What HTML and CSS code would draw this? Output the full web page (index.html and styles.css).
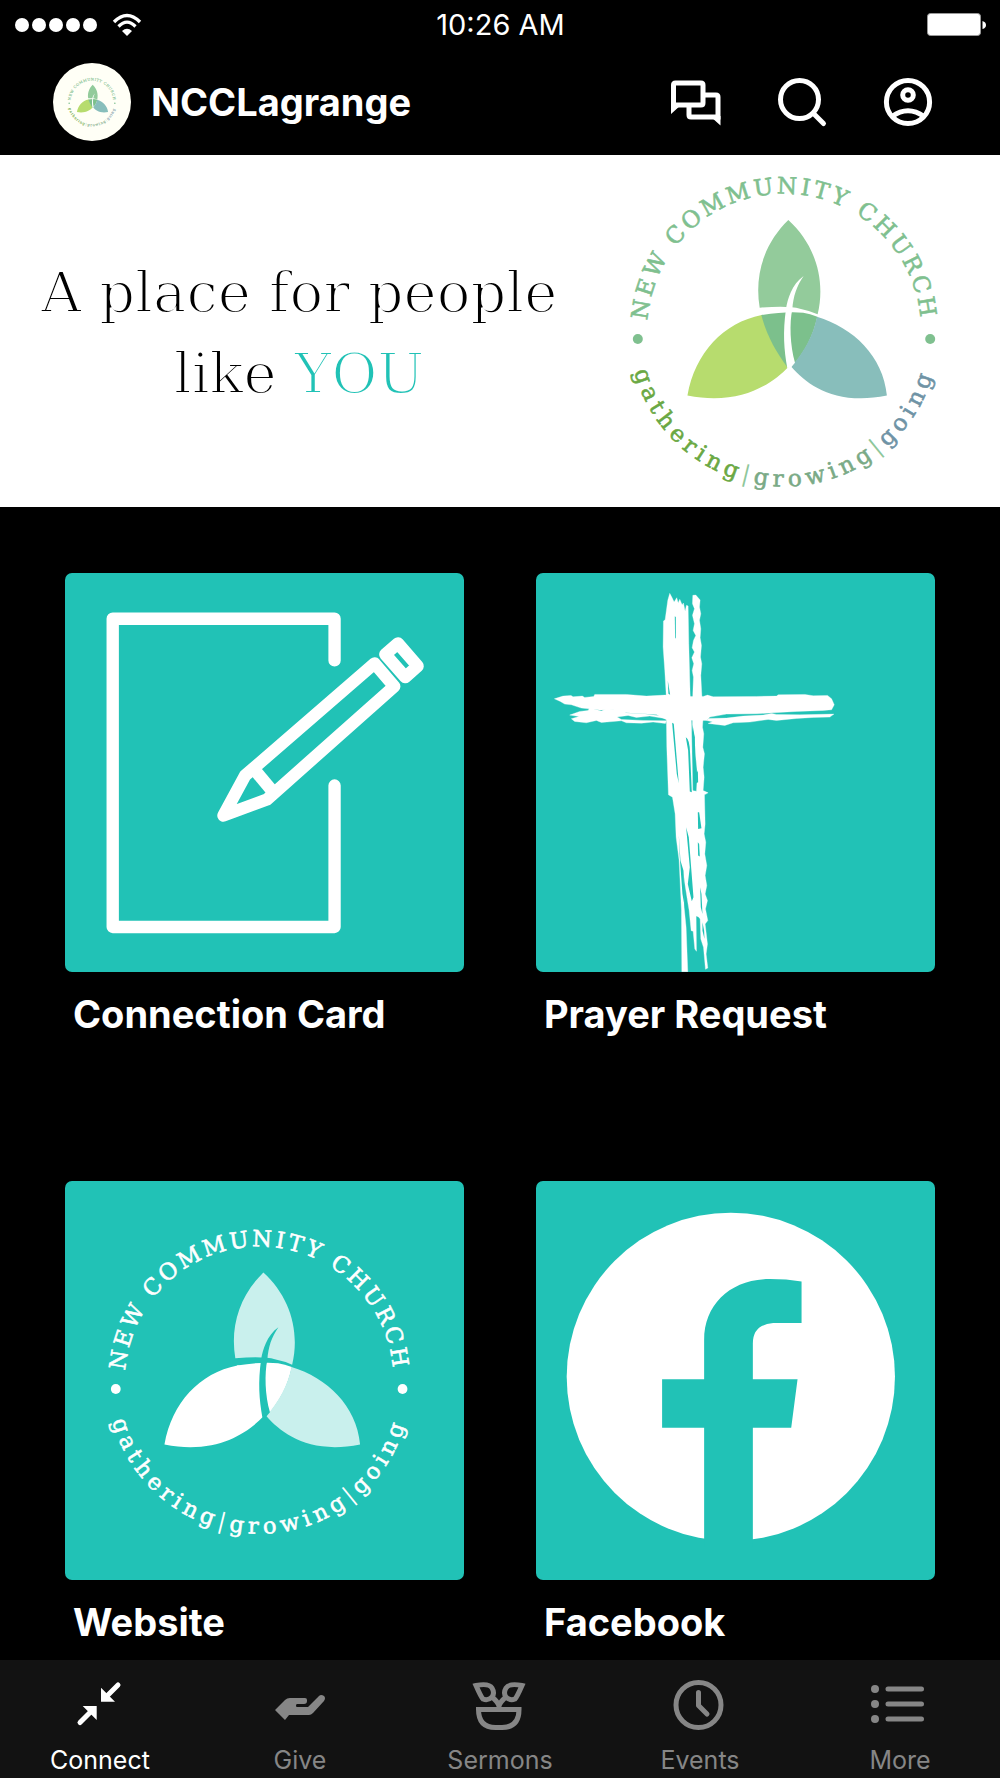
FILE: index.html
```html
<!DOCTYPE html>
<html lang="en">
<head>
    <meta charset="UTF-8">
    <meta name="viewport" content="width=device-width, initial-scale=1.0">
    <title>NCCLagrange</title>

    <link rel="stylesheet" href="styles.css">
</head>
<body>
    <div class="status">
        <div class="status_left">
            <span class="signal"><i></i><i></i><i></i><i></i><i></i></span>
            <svg class="wifi" viewBox="0 0 28 22">
                <path d="M1 8 Q14 -5 27 8" fill="none" stroke="#fff" stroke-width="3.4" />
                <path d="M5.500 12.500 Q14 4 22.500 12.500" fill="none" stroke="#fff" stroke-width="3.200" />
                <path d="M9 17 Q14 12.500 19 17 L14 22z" fill="#fff" />
            </svg>
        </div>
        <div class="time">10:26 AM</div>
        <div class="status_right">
            <svg class="battery" viewBox="0 0 59 24">
                <rect x="0.500" y="0.500" width="53" height="22" rx="3" fill="#fff" stroke="#999" />
                <path d="M55.500 8 Q59 9 59 12 Q59 15 55.500 16z" fill="#fff" />
            </svg>
        </div>
    </div>

    <header class="header">
        <div class="avatar">
            <svg class="avatar_logo" viewBox="-160 -160 320 320"><use href="#emblem" /></svg>
        </div>
        <h1 class="name">NCCLagrange</h1>
        <div class="actions">
            <button class="icon_button" aria-label="Messages">
                <svg class="icon" viewBox="0 0 48 48">
                    <path d="M1.500 28 V7 Q1.500 5 3.500 5 H29 Q31 5 31 7 V25 Q31 27 29 27 H3" />
                    <path d="M32 17 H44 Q46 17 46 19 V39 H19 Q17 39 17 37 V28" />
                    <path class="solid" d="M-1 25 V36 L9 27z M48.500 38 V47.500 L39 39z" />
                </svg>
            </button>
            <button class="icon_button" aria-label="Search">
                <svg class="icon" viewBox="0 0 48 48">
                    <circle cx="21.500" cy="21.500" r="19" />
                    <path d="M35.500 35.500 L45.500 45.500" stroke-linecap="round" />
                </svg>
            </button>
            <button class="icon_button" aria-label="Profile">
                <svg class="icon" viewBox="0 0 48 48">
                    <circle cx="24" cy="24" r="21.600" />
                    <circle cx="24" cy="17" r="5.300" />
                    <path d="M8 38.500 Q24 27 40 38.500" />
                </svg>
            </button>
        </div>
    </header>

    <section class="banner">
        <p class="tagline">A place for people<br>like <span class="you">YOU</span></p>
        <svg class="banner_logo" viewBox="-160 -160 320 320">
            <defs>
                <path id="arc_top" d="M-135.900 17 A137 137 0 1 1 135.900 17" />
                <path id="arc_bottom" d="M-154.500 13 A155 155 0 0 0 154.500 13" />
            </defs>
            <g id="emblem">
                <g transform="scale(0.333) translate(-552 -545)">
                    <path class="leaf_top" d="M565 212 C490 285 463 380 479 475 Q565 468 600 478 Q630 484 653 495 C678 390 645 285 565 212Z" />
                    <path class="leaf_left" d="M262 739 C285 610 370 520 485 497 L492 497 C507 560 537 610 566 652 C515 705 420 770 262 739Z" />
                    <path class="leaf_mid" d="M484 497 Q560 485 610 490 Q630 493 652 502 C640 560 615 605 580 647 L563 655 C530 610 500 560 484 497Z" />
                    <path class="leaf_right" d="M651 502 C760 535 850 620 861 739 C705 770 620 705 574 652 C610 610 640 560 651 502Z" />
                    <path class="stem" d="M611 380 C575 405 563 450 558 478 C548 550 552 600 562 657 L574 653 L585 640 C570 590 568 520 577 480 C580 440 590 410 611 380Z" />
                    <circle class="dot" cx="113" cy="569" r="15" />
                    <circle class="dot" cx="991" cy="569" r="15" />
                </g>
                <text class="ring ring_top"><textPath href="#arc_top" startOffset="50%">NEW COMMUNITY CHURCH</textPath></text>
                <text class="ring ring_bottom"><textPath href="#arc_bottom" startOffset="50%"><tspan class="gathering">gathering</tspan><tspan class="bar">|</tspan><tspan class="growing">growing</tspan><tspan class="bar">|</tspan><tspan class="going">going</tspan></textPath></text>
            </g>
        </svg>
    </section>

    <main class="cards">
        <a class="card" href="#connection">
            <svg class="tile" viewBox="16 38 1196 1196">
                <g fill="none" stroke="#fff" stroke-width="37" stroke-linejoin="round" stroke-linecap="round">
                    <path d="M824 300 V175 H159 V1099 H824 V675" />
                    <path d="M944 309 L1003 378 L621 717 L491 765 L556 645Z" />
                    <path d="M584 628 L636 690" stroke-linecap="butt" />
                    <path d="M1014 249 L1073 317 L1036 350 L976 282Z" />
                </g>
            </svg>
            <span class="card_title">Connection Card</span>
        </a>
        <a class="card" href="#prayer">
            <svg class="tile" viewBox="19 38 1196 1196">
                <g fill="#fff" stroke="#fff" stroke-width="1">
                    <!-- upright, wide brush stroke -->
                    <path d="M420 99 L427 112 L433 125 L441 112 L445 128 L450 117 L457 133 L461 128 L466 153 L470 135 L475 137 L477 250 L481 400 L485 490 L489 697 L495 700 L503 755 L506 845 L510 950 L515 1072 L499 1066 L500 1172 L495 1165 L490 1112 L484 1110 L478 1050 L466 975 L460 930 L463 1040 L469 1100 L474 1233 L456 1233 L455 1050 L448 900 L439 830 L436 760 L428 710 L416 703 L411 560 L409 400 L405 330 L400 260 L401 182 L406 178 L414 120Z" />
                    <!-- upright, dry edge -->
                    <path d="M489 105 L498 104 L511 119 L509 140 L513 160 L509 180 L513 205 L511 232 L515 255 L512 290 L516 310 L513 345 L516 402 L520 470 L518 500 L522 520 L519 560 L524 580 L520 620 L523 650 L520 690 L535 697 L524 703 L526 790 L523 820 L528 845 L525 880 L531 915 L526 945 L531 975 L526 1000 L533 1020 L527 1045 L534 1080 L526 1090 L533 1150 L529 1180 L534 1222 L527 1226 L521 1160 L513 1135 L511 1075 L500 1060 L495 950 L485 780 L486 690 L500 692 L503 640 L498 590 L494 530 L488 500 L489 400 L491 350 L487 330 L492 310 L486 292 L494 275 L487 262 L491 240 L498 225 L490 210 L494 190 L488 165 L494 145 L488 130Z" />
                    <!-- crossbar -->
                    <path d="M74 415 L100 407 L124 405 L130 409 L158 407 L165 411 L192 408 L195 402 L290 402 L350 407 L405 404 L480 408 L520 408 L533 404 L550 409 L680 408 L740 407 L745 403 L825 402 L850 406 L893 405 L905 415 L913 433 L905 448 L880 450 L800 453 L730 457 L680 460 L590 461 L540 470 L530 480 L410 478 L380 462 L330 459 L290 457 L250 448 L210 449 L155 443 L125 433 L105 431 L92 423Z" />
                    <path d="M120 464 L150 453 L175 450 L180 443 L215 452 L230 445 L275 449 L290 458 L340 460 L409 468 L405 474 L360 467 L320 471 L295 465 L262 470 L275 477 L340 480 L410 481 L407 489 L370 485 L335 488 L290 487 L275 481 L240 484 L215 486 L200 480 L170 487 L135 483 L125 475 L148 468Z" />
                    <path d="M536 474 L590 473 L640 467 L700 464 L725 459 L740 462 L810 463 L912 461 L900 470 L850 471 L800 474 L740 480 L715 477 L660 485 L610 487 L585 495 L535 489 L548 484 L530 480Z" />
                </g>
                <g class="scratch">
                    <path d="M435 168 L438 170 L438 232 L436 235Z" />
                    <path d="M414 360 L421 403 L416 400Z" />
                    <path d="M427 487 L432 490 L447 668 L441 640Z" />
                    <path d="M468 530 Q480 535 481 580 L486 695 L480 693 L475 570Z" />
                    <path d="M488 492 L495 530 L496 610 L490 590Z" />
                    <path d="M500 635 L504 632 L505 665 L499 668Z" />
                    <path d="M504 755 L508 755 L515 803 L505 805Z" />
                    <path d="M469 800 L477 830 L491 1010 L486 1022 L474 970 L480 920Z" />
                    <path d="M447 822 L452 900 L461 930 L465 1040 L458 1000 L450 890Z" />
                    <path d="M504 845 L508 850 L510 888 L505 885Z" />
                    <path d="M511 980 L515 1000 L518 1060 L513 1040Z M518 1085 L523 1110 L524 1135 L518 1110Z" />
                </g>
            </svg>
            <span class="card_title">Prayer Request</span>
        </a>
        <a class="card" href="#website">
            <svg class="tile tile_logo" viewBox="16 33 1196 1196">
                <g transform="translate(598 633) scale(2.940)"><use href="#emblem" /></g>
            </svg>
            <span class="card_title">Website</span>
        </a>
        <a class="card" href="#facebook">
            <svg class="tile" viewBox="19 33 1196 1196">
                <circle cx="603" cy="620" r="492" fill="#fff" />
                <path class="scratch" d="M523 1130 V773 H397 V627 H523 V510 C523 400 605 327 720 327 Q770 327 815 334 V459 H730 Q669 463 669 520 V627 H803 L784 773 H669 V1130Z" />
            </svg>
            <span class="card_title">Facebook</span>
        </a>
    </main>

    <nav class="tabs">
        <a class="tab active" href="#connect">
            <svg class="tab_icon" viewBox="0 0 50 50">
                <path class="line" d="M5 42.500 L17 30.500 M43 5 L31 17" />
                <path d="M7.700 26 H21.700 V40z M26 7.700 V21.700 H40z" />
            </svg>
            <span>Connect</span>
        </a>
        <a class="tab" href="#give">
            <svg class="tab_icon" viewBox="0 0 50 50">
                <path d="M0 30 L10 20 Q12 18 15 18 H30 Q32 18 32 20 V21 Q32 24 29 24 H22 Q21 24 21 25.500 Q21 27 22 27 H33 L44 16 Q46 14 49 16 Q51 18 49 21 L38 33 Q36 35 34 35 H14 L10 40z" />
            </svg>
            <span>Give</span>
        </a>
        <a class="tab" href="#sermons">
            <svg class="tab_icon" viewBox="0 0 50 50">
                <g class="line line_sharp">
                    <path d="M3.500 29.500 H44 Q44 47.500 27 47.500 H20.500 Q3.500 47.500 3.500 29.500z" />
                    <path d="M24 29 V26 Q23 22 17 17 M24 26 Q25 22 31 17" />
                    <path d="M1 5.500 Q14 3 17 8 Q20 13 17 17 Q13 21 8 19 Q6 17 1 5.500z" />
                    <path d="M47 5.500 Q34 3 31 8 Q28 13 31 17 Q35 21 40 19 Q42 17 47 5.500z" />
                </g>
            </svg>
            <span>Sermons</span>
        </a>
        <a class="tab" href="#events">
            <svg class="tab_icon" viewBox="0 0 50 50">
                <g class="line">
                    <circle cx="23.500" cy="25" r="22.500" />
                    <path d="M23.500 12.500 V25.500 L32 34" />
                </g>
            </svg>
            <span>Events</span>
        </a>
        <a class="tab" href="#more">
            <svg class="tab_icon" viewBox="0 0 50 50">
                <path class="line" d="M13 9 H46.500 M13 24 H46.500 M13 39 H46.500" />
                <circle cx="0" cy="9" r="4" />
                <circle cx="0" cy="24" r="4" />
                <circle cx="0" cy="39" r="4" />
            </svg>
            <span>More</span>
        </a>
    </nav>
</body>
</html>
```

FILE: styles.css
```css
* {
    box-sizing: border-box;
}

body {
    margin: 0;
    min-height: 100vh;
    display: flex;
    flex-direction: column;
    background: #000;
    color: #fff;
    font-family: Inter, "Liberation Sans", Arial, sans-serif;
}

a {
    color: inherit;
    text-decoration: none;
}

svg {
    display: block;
    overflow: visible;
}

/* status bar */
.status {
    display: grid;
    grid-template-columns: 1fr auto 1fr;
    align-items: center;
    height: 50px;
    padding: 0 14px 0 15px;
}

.status_left {
    display: flex;
    align-items: center;
    gap: 16px;
}

.status_right {
    display: flex;
    justify-content: flex-end;
}

.signal {
    display: flex;
    gap: 3px;
}

.signal i {
    width: 14px;
    height: 14px;
    border-radius: 50%;
    background: #fff;
}

.wifi {
    width: 28px;
    height: 22px;
}

.time {
    font-size: 29px;
    line-height: 32px;
}

.battery {
    width: 59px;
    height: 24px;
}

/* header */
.header {
    display: flex;
    align-items: center;
    gap: 20px;
    height: 105px;
    padding: 0 68px 2px 53px;
}

.avatar {
    width: 78px;
    height: 78px;
    border-radius: 50%;
    background: #fffff6;
    display: flex;
    align-items: center;
    justify-content: center;
}

.avatar_logo {
    width: 50px;
    height: 50px;
}

.name {
    margin: 0;
    font-size: 38px;
    line-height: 48px;
    font-weight: 700;
}

.actions {
    display: flex;
    gap: 58px;
    margin-left: auto;
}

.icon_button {
    padding: 0;
    border: 0;
    background: none;
    color: #fff;
    cursor: pointer;
}

.icon {
    width: 48px;
    height: 48px;
    fill: none;
    stroke: currentColor;
    stroke-width: 5;
}

.icon .solid {
    fill: currentColor;
    stroke: none;
}

/* banner */
.banner {
    display: flex;
    align-items: center;
    justify-content: space-between;
    height: 352px;
    padding: 0 56px 0 41px;
    background: #fff;
}

.tagline {
    margin: 0;
    padding-top: 4px;
    color: #000;
    font-family: "DejaVu Serif", serif;
    font-size: 56px;
    line-height: 81px;
    text-align: center;
    -webkit-text-stroke: 2px #fff;
}

.you {
    color: #21c2b6;
}

.banner_logo {
    width: 320px;
    height: 320px;
}

/* emblem, coloured through variables so that it can be reused */
.leaf_top { fill: var(--leaf-top, #93cb9b); }
.leaf_left { fill: var(--leaf-left, #b7dc6e); }
.leaf_mid { fill: var(--leaf-mid, #7cc08c); }
.leaf_right { fill: var(--leaf-right, #88bebb); }
.stem { fill: var(--stem, #fff); }
.dot { fill: var(--ring, #7fc08f); }

.ring {
    font-family: "DejaVu Serif", serif;
    font-size: 23px;
    text-anchor: middle;
}

.ring_top {
    fill: var(--ring, #7fc08f);
    stroke: var(--ring, #7fc08f);
    letter-spacing: 3px;
}

.ring_bottom {
    letter-spacing: 5px;
}

.gathering { fill: var(--ring, #6aa843); stroke: var(--ring, #6aa843); }
.bar { fill: var(--ring, #8ec79b); }
.growing { fill: var(--ring, #7aaa86); stroke: var(--ring, #7aaa86); }
.going { fill: var(--ring, #6f93a5); stroke: var(--ring, #6f93a5); }

/* cards */
.cards {
    flex: 1;
    display: grid;
    grid-template-columns: 1fr 1fr;
    align-content: start;
    gap: 143px 72px;
    padding: 66px 65px 10px;
}

.card {
    display: flex;
    flex-direction: column;
    gap: 18px;
}

.tile {
    width: 100%;
    aspect-ratio: 1;
    border-radius: 7px;
    background: #21c2b6;
    overflow: hidden;
}

.tile_logo {
    --leaf-top: #c9f0ed;
    --leaf-left: #fff;
    --leaf-mid: #fff;
    --leaf-right: #c9f0ed;
    --stem: #21c2b6;
    --ring: #fff;
}

.scratch {
    fill: #21c2b6;
}

.card_title {
    padding-left: 8px;
    font-size: 38px;
    line-height: 48px;
    font-weight: 700;
}

/* bottom tabs */
.tabs {
    position: sticky;
    bottom: 0;
    display: flex;
    height: 118px;
    padding-top: 20px;
    background: #121212;
}

.tab {
    flex: 1;
    display: flex;
    flex-direction: column;
    align-items: center;
    gap: 15px;
    color: #868686;
    font-size: 25px;
    line-height: 30px;
}

.tab.active {
    color: #fff;
}

.tab_icon {
    width: 50px;
    height: 50px;
    fill: currentColor;
}

.line {
    fill: none;
    stroke: currentColor;
    stroke-width: 5;
    stroke-linecap: round;
    stroke-linejoin: round;
}

.line_sharp {
    stroke-linecap: butt;
    stroke-linejoin: miter;
}

.ring {
    stroke-width: 0.6;
}
```
